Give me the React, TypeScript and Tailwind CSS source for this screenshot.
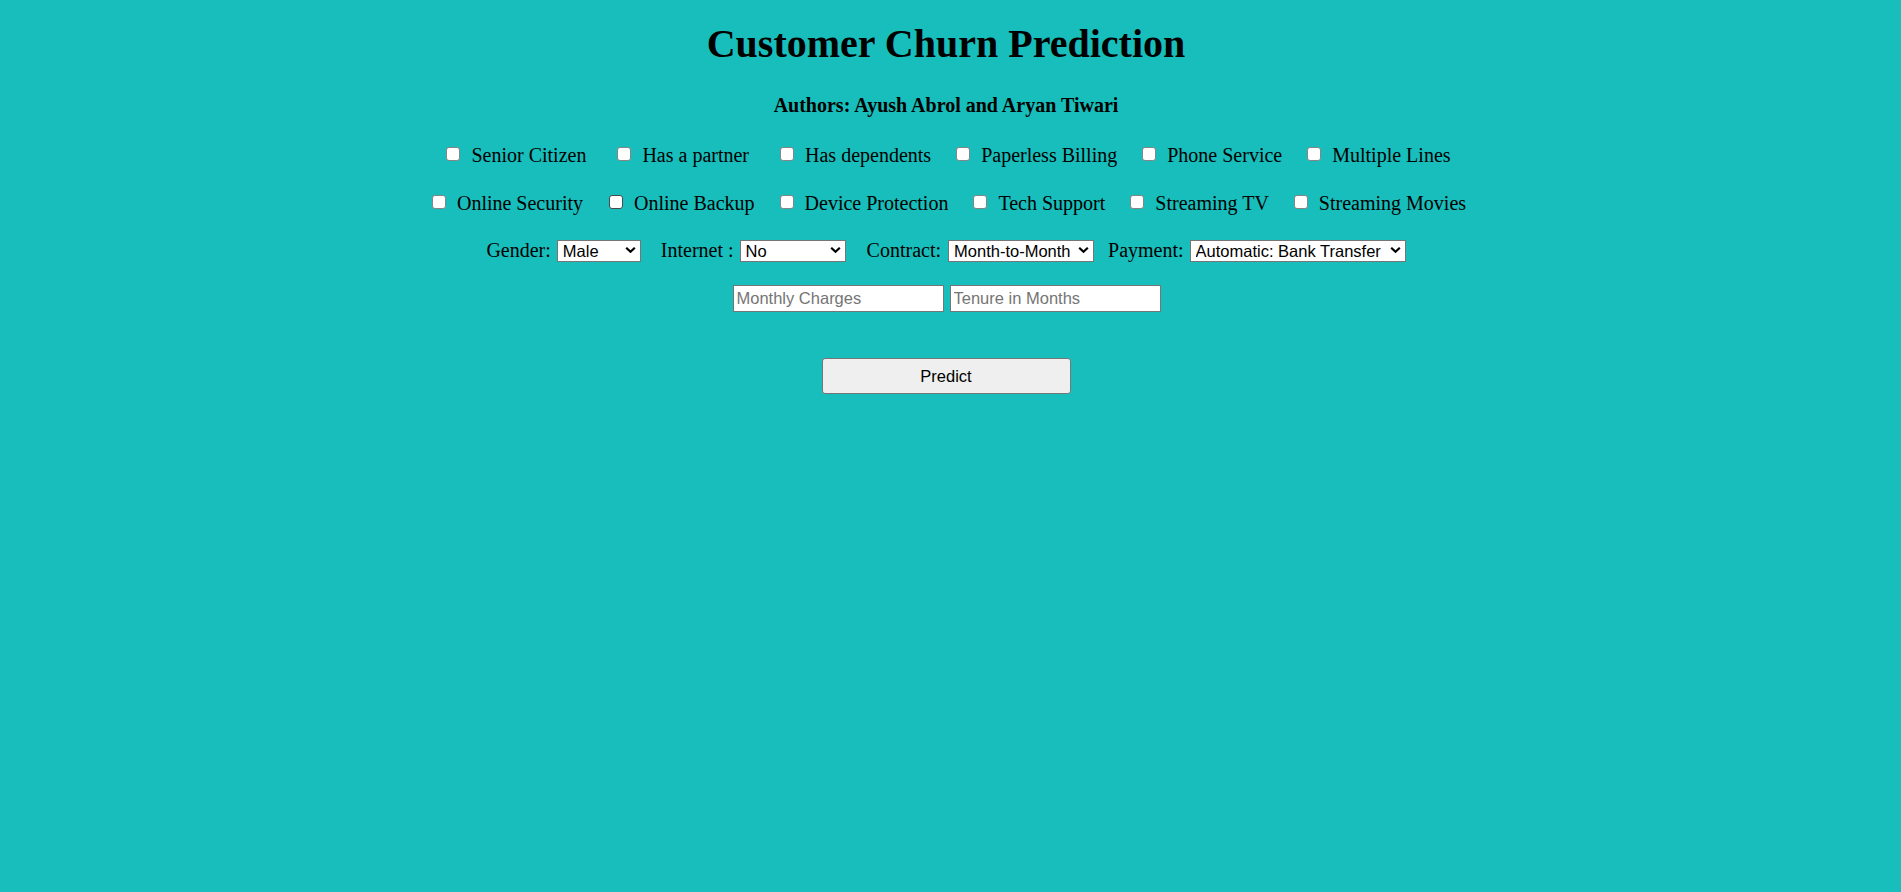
import React from 'react';

const serif = { fontFamily: '"Liberation Serif", "Times New Roman", serif' };
const sans = { fontFamily: '"Liberation Sans", Arial, sans-serif' };

type Box = { label: string; gap: number; dark?: boolean };

const rowOne: Box[] = [
  { label: 'Senior Citizen', gap: 0 },
  { label: 'Has a partner', gap: 31 },
  { label: 'Has dependents', gap: 31 },
  { label: 'Paperless Billing', gap: 25 },
  { label: 'Phone Service', gap: 25 },
  { label: 'Multiple Lines', gap: 25 },
];

const rowTwo: Box[] = [
  { label: 'Online Security', gap: 0 },
  { label: 'Online Backup', gap: 26, dark: true },
  { label: 'Device Protection', gap: 25 },
  { label: 'Tech Support', gap: 25 },
  { label: 'Streaming TV', gap: 25 },
  { label: 'Streaming Movies', gap: 25 },
];

function CheckRow({ items, className }: { items: Box[]; className?: string }) {
  return (
    <div className={`flex items-center h-[24px] text-[20px] leading-[24px] ${className ?? ''}`}>
      {items.map((item) => (
        <label key={item.label} className="flex items-center" style={{ marginLeft: item.gap }}>
          <input
            type="checkbox"
            className={`appearance-none w-[14px] h-[14px] bg-white rounded-[3px] -translate-y-[1px] ${
              item.dark ? 'border-[1.5px] border-[#4a4a4a]' : 'border border-[#858585]'
            }`}
          />
          <span className="ml-[11px] whitespace-nowrap">{item.label}</span>
        </label>
      ))}
    </div>
  );
}

// native-looking dropdown chevron
function Chevron() {
  return (
    <svg className="absolute right-[5px] top-1/2 -translate-y-1/2 pointer-events-none" width="11" height="7" viewBox="0 0 11 7">
      <path d="M1.2 1.2 L5.5 5.3 L9.8 1.2" fill="none" stroke="#000" strokeWidth="2.2" />
    </svg>
  );
}

function Select({ width, options }: { width: number; options: string[] }) {
  return (
    <div className="relative" style={{ width }}>
      <select
        className="appearance-none w-full h-[22px] bg-white border border-[#767676] pl-[5px] text-[16.5px] leading-[20px] text-black outline-none"
        style={sans}
      >
        {options.map((o) => (
          <option key={o}>{o}</option>
        ))}
      </select>
      <Chevron />
    </div>
  );
}

export default function App() {
  return (
    <div className="min-h-[892px] w-full bg-[#17bebb] text-black flex flex-col items-center pr-[9px]" style={serif}>
      <h1 className="mt-[21px] text-[40px] leading-[46px] font-bold">Customer Churn Prediction</h1>
      <h4 className="mt-[27px] text-[20px] leading-[23px] font-bold">Authors: Ayush Abrol and Aryan Tiwari</h4>

      <CheckRow items={rowOne} className="mt-[26px] ml-[5px]" />
      <CheckRow items={rowTwo} className="mt-[24px] ml-[6px]" />

      <div className="mt-[24px] flex items-center h-[22px] text-[20px] leading-[22px]">
        <span>Gender:</span>
        <div className="ml-[6px]">
          <Select width={84} options={['Male', 'Female']} />
        </div>
        <span className="ml-[20px]">Internet :</span>
        <div className="ml-[6px]">
          <Select width={106} options={['No', 'DSL', 'Fiber optic']} />
        </div>
        <span className="ml-[21px]">Contract:</span>
        <div className="ml-[7px]">
          <Select width={146} options={['Month-to-Month', 'One year', 'Two year']} />
        </div>
        <span className="ml-[14px]">Payment:</span>
        <div className="ml-[6px]">
          <Select
            width={216}
            options={['Automatic: Bank Transfer', 'Automatic: Credit Card', 'Electronic Check', 'Mailed Check']}
          />
        </div>
      </div>

      <div className="mt-[24px] ml-[1px] flex gap-[6px] text-[16.5px]" style={sans}>
        <input
          type="text"
          placeholder="Monthly Charges"
          className="w-[211px] h-[27px] bg-white border border-[#767676] px-[3px] placeholder:text-[#757575] outline-none"
        />
        <input
          type="text"
          placeholder="Tenure in Months"
          className="w-[211px] h-[27px] bg-white border border-[#767676] px-[3px] placeholder:text-[#757575] outline-none"
        />
      </div>

      <button
        type="button"
        className="mt-[46px] w-[249px] h-[36px] bg-[#efefef] border border-[#767676] rounded-[3px] text-[16.5px] text-black"
        style={sans}
      >
        Predict
      </button>
    </div>
  );
}
